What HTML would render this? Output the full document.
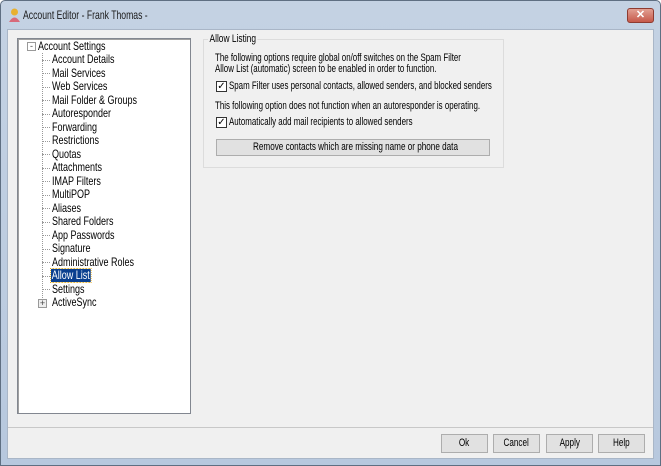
<!DOCTYPE html>
<html><head><style>
*{margin:0;padding:0;box-sizing:border-box}
body{width:661px;height:466px;overflow:hidden;font-family:"Liberation Sans",sans-serif;font-size:11px;color:#000;background:#fff}
.frame{position:absolute;left:0;top:0;width:661px;height:466px;background:linear-gradient(#c4d2e3,#b7c8de);border:1px solid #5f6f82;border-radius:5px 5px 0 0}
.title{position:absolute;left:23px;top:8px;font-size:12px;color:#1a1a1a;transform:scaleX(0.72);transform-origin:0 50%;white-space:nowrap}
.close{position:absolute;left:627px;top:8px;width:27px;height:15px;border-radius:3px;background:linear-gradient(#e2a093,#c6594a);border:1px solid #8e3b30;color:#fff;font-size:11px;font-weight:bold;text-align:center;line-height:13px}
.client{position:absolute;left:7px;top:29px;width:647px;height:430px;background:#f0f0f0;border:1px solid #a9b6c7}
.tree{position:absolute;left:17px;top:38px;width:174px;height:376px;background:#fff;border:1px solid #828790;box-shadow:inset 1px 1px 0 #a0a0a0}
.it{position:absolute;left:52px;height:13px;line-height:13px;font-size:12px;white-space:nowrap;transform:scaleX(0.75);transform-origin:0 50%}
.dash{position:absolute;left:42px;width:8px;border-top:1px dotted #999}
.sel{background:#0a3f8f;color:#fff;outline:1px dotted #e0a000;padding:0 1px;left:51px}
.grp{position:absolute;left:203px;top:39px;width:301px;height:129px;border:1px solid #dcdcdc}
.gl{position:absolute;left:208px;top:33px;background:#f0f0f0;padding:0 2px;font-size:11px;transform:scaleX(0.76);transform-origin:0 50%;white-space:nowrap}
.t{position:absolute;font-size:11px;white-space:nowrap;line-height:11px;transform:scaleX(0.72);transform-origin:0 50%}
.cb{position:absolute;width:11px;height:11px;border:1px solid #333;background:#fff;font-size:10px;line-height:9px;text-align:center}
.btn{position:absolute;height:19px;background:#e1e1e1;border:1px solid #adadad;text-align:center;line-height:17px;font-size:11px;white-space:nowrap;overflow:visible}
.btn span{display:inline-block;transform:scaleX(0.74);white-space:nowrap}
.sep{position:absolute;left:8px;top:427px;width:645px;border-top:1px solid #c8c8c8}
</style></head><body>
<div class="frame"></div>
<svg style="position:absolute;left:8px;top:8px" width="13" height="15"><circle cx="6.5" cy="4" r="3.5" fill="#e8b030"/><path d="M1 14 Q6.5 5 12 14Z" fill="#d86a7a"/></svg>
<div class="title">Account Editor - Frank Thomas -</div>
<div class="close">✕</div>
<div class="client"></div>
<div class="tree"></div>
<div style="position:absolute;left:27px;top:42px;width:9px;height:9px;border:1px solid #999;background:#fff;font-size:9px;line-height:6px;text-align:center;color:#444">-</div>
<div class="it" style="left:38px;top:40px">Account Settings</div>
<div style="position:absolute;left:42px;top:53px;height:251px;border-left:1px dotted #999"></div>
<div class="dash" style="top:60px"></div><div class="it" style="top:53px">Account Details</div>
<div class="dash" style="top:73px"></div><div class="it" style="top:67px">Mail Services</div>
<div class="dash" style="top:87px"></div><div class="it" style="top:80px">Web Services</div>
<div class="dash" style="top:100px"></div><div class="it" style="top:94px">Mail Folder &amp; Groups</div>
<div class="dash" style="top:114px"></div><div class="it" style="top:107px">Autoresponder</div>
<div class="dash" style="top:127px"></div><div class="it" style="top:121px">Forwarding</div>
<div class="dash" style="top:141px"></div><div class="it" style="top:134px">Restrictions</div>
<div class="dash" style="top:154px"></div><div class="it" style="top:148px">Quotas</div>
<div class="dash" style="top:168px"></div><div class="it" style="top:161px">Attachments</div>
<div class="dash" style="top:181px"></div><div class="it" style="top:175px">IMAP Filters</div>
<div class="dash" style="top:195px"></div><div class="it" style="top:188px">MultiPOP</div>
<div class="dash" style="top:208px"></div><div class="it" style="top:202px">Aliases</div>
<div class="dash" style="top:222px"></div><div class="it" style="top:215px">Shared Folders</div>
<div class="dash" style="top:235px"></div><div class="it" style="top:229px">App Passwords</div>
<div class="dash" style="top:249px"></div><div class="it" style="top:242px">Signature</div>
<div class="dash" style="top:262px"></div><div class="it" style="top:256px">Administrative Roles</div>
<div class="dash" style="top:276px"></div><div class="it sel" style="top:269px">Allow List</div>
<div class="dash" style="top:289px"></div><div class="it" style="top:283px">Settings</div>
<div style="position:absolute;left:38px;top:299px;width:9px;height:9px;border:1px solid #999;background:#eee;font-size:9px;line-height:7px;text-align:center;color:#444">+</div>
<div class="it" style="top:296px">ActiveSync</div>
<div class="grp"></div>
<div class="gl">Allow Listing</div>
<div class="t" style="left:215px;top:53px">The following options require global on/off switches on the Spam Filter</div>
<div class="t" style="left:215px;top:64px">Allow List (automatic) screen to be enabled in order to function.</div>
<div class="cb" style="left:216px;top:81px">✓</div>
<div class="t" style="left:229px;top:81px">Spam Filter uses personal contacts, allowed senders, and blocked senders</div>
<div class="t" style="left:215px;top:101px">This following option does not function when an autoresponder is operating.</div>
<div class="cb" style="left:216px;top:117px">✓</div>
<div class="t" style="left:229px;top:117px">Automatically add mail recipients to allowed senders</div>
<div class="btn" style="left:216px;top:139px;width:274px;height:17px;line-height:15px"><span>Remove contacts which are missing name or phone data</span></div>
<div class="sep"></div>
<div class="btn" style="left:441px;top:434px;width:47px"><span>Ok</span></div>
<div class="btn" style="left:493px;top:434px;width:47px"><span>Cancel</span></div>
<div class="btn" style="left:546px;top:434px;width:47px"><span>Apply</span></div>
<div class="btn" style="left:598px;top:434px;width:47px"><span>Help</span></div>
</body></html>
